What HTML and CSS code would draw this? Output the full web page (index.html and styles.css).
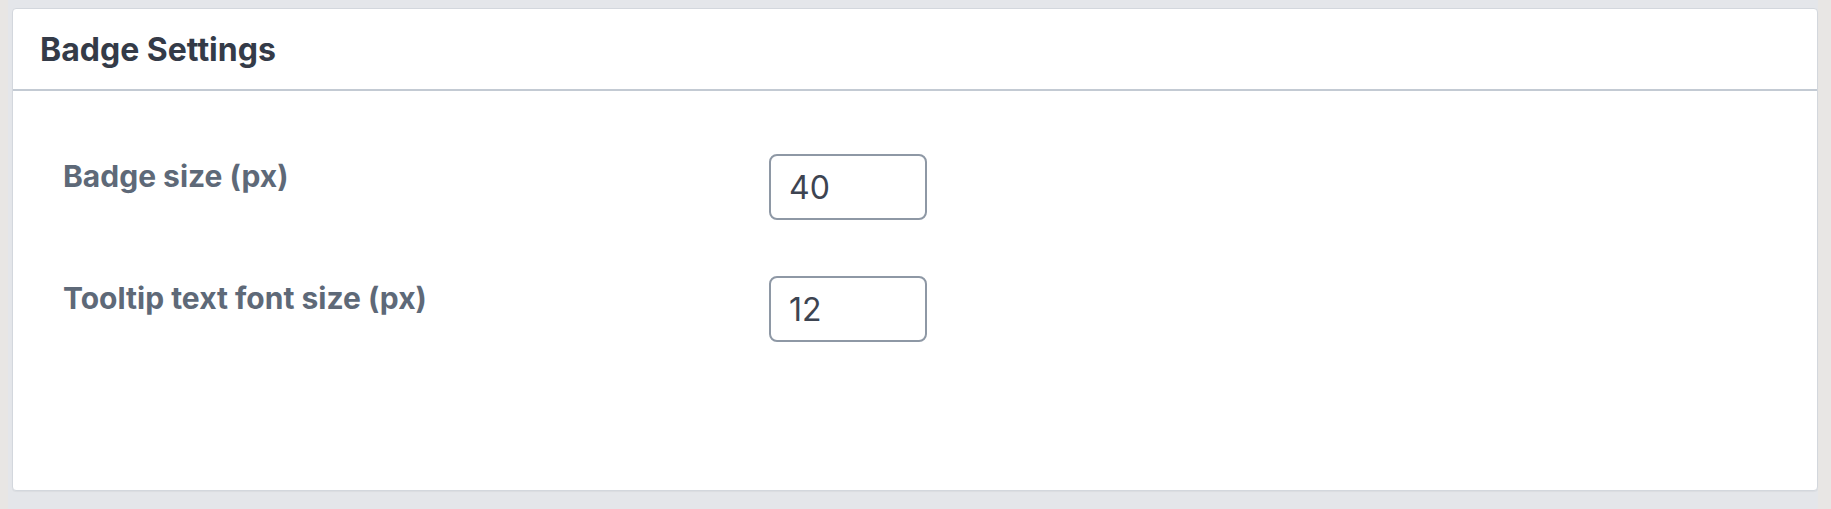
FILE: index.html
```html
<!DOCTYPE html>
<html lang="en">
    <head>
        <meta charset="UTF-8" />
        <title>Badge Settings</title>
        <link rel="stylesheet" href="styles.css">
    </head>

    <body>
        <div class="main">
            <div class="postbox">
                <div class="postbox-header">
                    <h2>Badge Settings</h2>
                </div>
                <div class="inside">
                    <div class="field-row">
                        <label for="badge-size">Badge size (px)</label>
                        <input id="badge-size" type="number" value="40" />
                    </div>
                    <div class="field-row">
                        <label for="tooltip-size">Tooltip text font size (px)</label>
                        <input id="tooltip-size" type="number" value="12" />
                    </div>
                </div>
            </div>
        </div>
    </body>
</html>
```

FILE: styles.css
```css
* {
    margin: 0;
    padding: 0;
    box-sizing: border-box;
}

html,
body {
    height: 100%;
}

body {
    display: flex;
    background: #e8e6e4;
    font-family: Inter, "Noto Sans", sans-serif;
}

.main {
    flex: 1;
    margin: 0 13px 0 8px;
    padding: 8px 0 0 4px;
    background: #e4e6ea;
}

.postbox {
    height: 483px;
    background: #fff;
    border: 1px solid #d3d7dd;
    border-radius: 4px;
    box-shadow: 0 1px 1px rgba(0, 0, 0, 0.04);
}

.postbox-header {
    height: 82px;
    display: flex;
    align-items: center;
    padding: 0 0 0 27px;
    border-bottom: 2px solid #c3cad3;
}

.postbox-header h2 {
    font-size: 32px;
    font-weight: 700;
    color: #343b48;
}

.inside {
    display: flex;
    flex-direction: column;
    gap: 56px;
    padding: 63px 0 0 50px;
}

.field-row {
    display: grid;
    grid-template-columns: 706px 158px;
}

.field-row label {
    padding-top: 4px;
    font-size: 30px;
    line-height: 36px;
    font-weight: 700;
    color: #5e6978;
}

.field-row input {
    width: 158px;
    height: 66px;
    padding: 0 18px;
    border: 2px solid #8e98a5;
    border-radius: 8px;
    font-family: inherit;
    font-size: 32px;
    color: #3d4451;
    background: #fff;
    -moz-appearance: textfield;
}

.field-row input::-webkit-inner-spin-button,
.field-row input::-webkit-outer-spin-button {
    -webkit-appearance: none;
}
```
